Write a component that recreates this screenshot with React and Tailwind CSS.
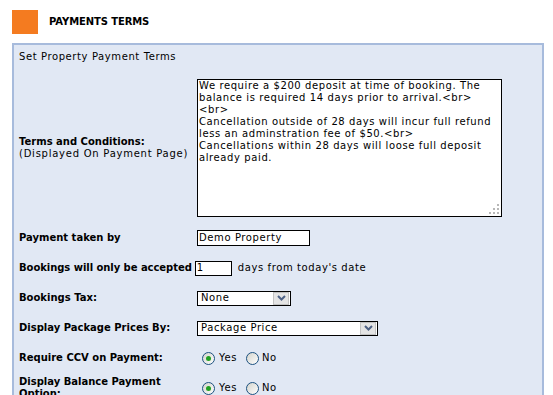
import React from "react";

function Radio({ checked }) {
  return (
    <span className="relative inline-flex h-[13px] w-[13px] items-center justify-center rounded-full border border-[#1c5180] bg-gradient-to-br from-[#d4d4cc] to-white">
      {checked && <span className="h-[5px] w-[5px] rounded-full bg-[#21a121]" />}
    </span>
  );
}

function Select({ width, value }) {
  return (
    <div className={`flex h-[15px] items-center border border-black bg-white ${width}`}>
      <span className="flex-1 pl-[3px] leading-[12px]">{value}</span>
      <span className="mr-[1px] flex h-[13px] w-[16px] items-center justify-center border border-[#c3c3c3] bg-[#e4e4e4]">
        <svg width="9" height="6" viewBox="0 0 9 6">
          <path d="M1 1 L4.5 4.5 L8 1" stroke="#4d6185" strokeWidth="2" fill="none" />
        </svg>
      </span>
    </div>
  );
}

export default function App() {
  return (
    <div className="h-[395px] w-[553px] overflow-hidden bg-white font-['DejaVu_Sans',sans-serif] text-[10px] leading-[12px] tracking-[0.6px] text-black">
      <div className="flex items-center pl-[12px] pt-[10px]">
        <div className="h-[24px] w-[26px] bg-[#f47b20]" />
        <div className="ml-[11px] font-bold tracking-[-0.1px]">PAYMENTS TERMS</div>
      </div>
      <div className="ml-[12px] mt-[9px] h-[400px] w-[532px] border-2 border-b-0 border-[#a7bbdc] bg-[#e1e8f4] pl-[5px] pt-[6px]">
        <div>Set Property Payment Terms</div>
        <div className="mt-[16px] flex items-center">
          <div className="w-[178px]">
            <div className="font-bold tracking-normal">Terms and Conditions:</div>
            <div className="tracking-[0.75px]">(Displayed On Payment Page)</div>
          </div>
          <div className="relative h-[138px] w-[305px] border border-black bg-white pl-[1px]">
            <div>We require a $200 deposit at time of booking. The</div>
            <div>balance is required 14 days prior to arrival.&lt;br&gt;</div>
            <div>&lt;br&gt;</div>
            <div>Cancellation outside of 28 days will incur full refund</div>
            <div>less an adminstration fee of $50.&lt;br&gt;</div>
            <div>Cancellations within 28 days will loose full deposit</div>
            <div>already paid.</div>
            <svg className="absolute bottom-[2px] right-[2px]" width="10" height="10" viewBox="0 0 10 10">
              <rect x="8" y="0" width="2" height="2" fill="#b8b8b8" />
              <rect x="4" y="4" width="2" height="2" fill="#b8b8b8" />
              <rect x="8" y="4" width="2" height="2" fill="#b8b8b8" />
              <rect x="0" y="8" width="2" height="2" fill="#b8b8b8" />
              <rect x="4" y="8" width="2" height="2" fill="#b8b8b8" />
              <rect x="8" y="8" width="2" height="2" fill="#b8b8b8" />
            </svg>
          </div>
        </div>
        <div className="mt-[6px] flex h-[30px] items-center">
          <div className="w-[178px] font-bold tracking-normal">Payment taken by</div>
          <div className="flex h-[16px] w-[113px] items-center border border-black bg-white pl-[1px]">Demo Property</div>
        </div>
        <div className="flex h-[30px] items-center">
          <span className="font-bold tracking-[-0.05px]">Bookings will only be accepted</span>
          <div className="ml-[3px] flex h-[15px] w-[37px] items-center border border-black bg-white pl-[1px]">1</div>
          <span className="ml-[6px]">days from today's date</span>
        </div>
        <div className="flex h-[30px] items-center">
          <div className="w-[178px] font-bold tracking-normal">Bookings Tax:</div>
          <Select width="w-[94px]" value="None" />
        </div>
        <div className="flex h-[30px] items-center">
          <div className="w-[178px] font-bold tracking-normal">Display Package Prices By:</div>
          <Select width="w-[181px]" value="Package Price" />
        </div>
        <div className="flex h-[30px] items-center">
          <div className="w-[178px] font-bold tracking-normal">Require CCV on Payment:</div>
          <div className="ml-[5px] flex items-center">
            <Radio checked />
            <span className="ml-[4px]">Yes</span>
            <span className="ml-[9px] flex"><Radio /></span>
            <span className="ml-[3px]">No</span>
          </div>
        </div>
        <div className="flex h-[30px] items-center">
          <div className="w-[178px] font-bold tracking-normal">
            Display Balance Payment
            <br />
            Option:
          </div>
          <div className="ml-[5px] flex items-center">
            <Radio checked />
            <span className="ml-[4px]">Yes</span>
            <span className="ml-[9px] flex"><Radio /></span>
            <span className="ml-[3px]">No</span>
          </div>
        </div>
      </div>
    </div>
  );
}
